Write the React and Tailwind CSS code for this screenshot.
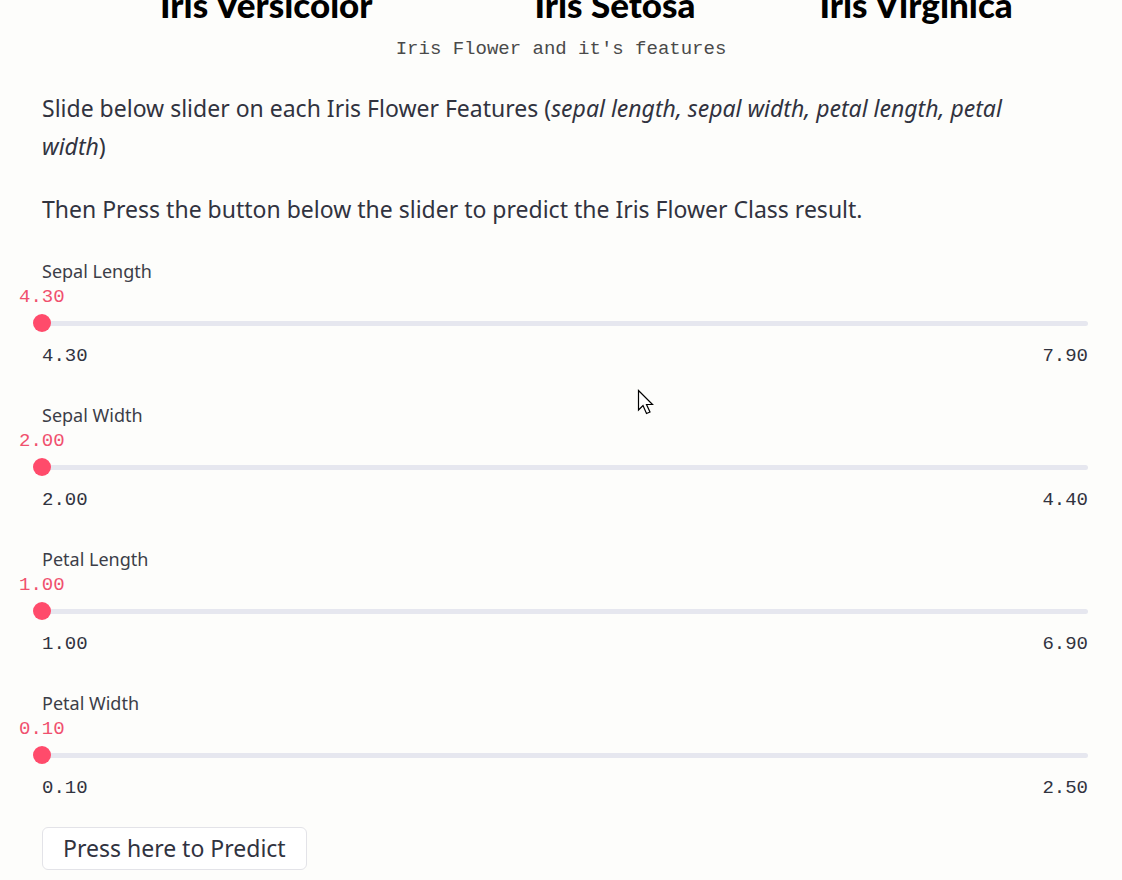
import React from "react";

const sliders = [
  { label: "Sepal Length", min: "4.30", max: "7.90" },
  { label: "Sepal Width", min: "2.00", max: "4.40" },
  { label: "Petal Length", min: "1.00", max: "6.90" },
  { label: "Petal Width", min: "0.10", max: "2.50" },
];

function Slider({ label, min, max }) {
  return (
    <div className="flex flex-col">
      <div className="h-[26px] font-['Noto_Sans',sans-serif] text-[18px] leading-[26px] text-[#3c3e48]">
        {label}
      </div>
      <div className="relative h-[26px]">
        <span className="absolute left-[-23px] top-0 font-['Liberation_Mono',monospace] text-[19px] leading-[26px] text-[#f0506e]">
          {min}
        </span>
      </div>
      <div className="relative flex h-[26px] items-center">
        <div className="h-[5px] w-full rounded-full bg-[#e6e7ef]" />
        <div className="absolute left-[-9px] top-[4px] h-[18px] w-[18px] rounded-full bg-[#ff4b6b]" />
      </div>
      <div className="flex justify-between font-['Liberation_Mono',monospace] text-[19px] leading-[40px] text-[#31333f]">
        <span>{min}</span>
        <span>{max}</span>
      </div>
    </div>
  );
}

export default function App() {
  return (
    <div className="relative min-h-[880px] w-[1122px] overflow-hidden bg-[#fdfdfb] text-[#31333f]">
      <div className="relative -mt-[15px] flex h-[38px] font-['Lato',sans-serif] text-[35px] font-black leading-[38px] text-black">
        <span className="ml-[160px]">Iris Versicolor</span>
        <span className="ml-[162px]">Iris Setosa</span>
        <span className="ml-[124px]">Iris Virginica</span>
      </div>
      <div className="mt-[13px] text-center font-['Liberation_Mono',monospace] text-[19px] leading-[26px] text-[#4a4a4a]">
        Iris Flower and it's features
      </div>
      <div className="mx-[42px] mt-[27px] w-[1010px] font-['Noto_Sans',sans-serif] text-[23px] leading-[38px] text-[#31333f]">
        <p>
          Slide below slider on each Iris Flower Features (<em>sepal length, sepal width, petal length, petal width</em>)
        </p>
        <p className="mt-[25px]">Then Press the button below the slider to predict the Iris Flower Class result.</p>
      </div>
      <div className="ml-[42px] mt-[30px] flex w-[1046px] flex-col gap-[26px]">
        {sliders.map((s) => (
          <Slider key={s.label} {...s} />
        ))}
      </div>
      <div className="ml-[42px] mt-[19px]">
        <button className="h-[43px] rounded-[6px] border border-[#e3e3e8] bg-white px-[20px] font-['Noto_Sans',sans-serif] text-[23px] leading-[41px] text-[#31333f]">
          Press here to Predict
        </button>
      </div>
      <svg className="absolute left-[637px] top-[389px]" width="20" height="30" viewBox="0 0 20 30">
        <path d="M1.5 1.5 L1.5 21 L6 16.5 L9.5 24.5 L13 23 L9.5 15.5 L15.5 15.5 Z" fill="white" stroke="black" strokeWidth="1.2" strokeLinejoin="miter" />
      </svg>
    </div>
  );
}
